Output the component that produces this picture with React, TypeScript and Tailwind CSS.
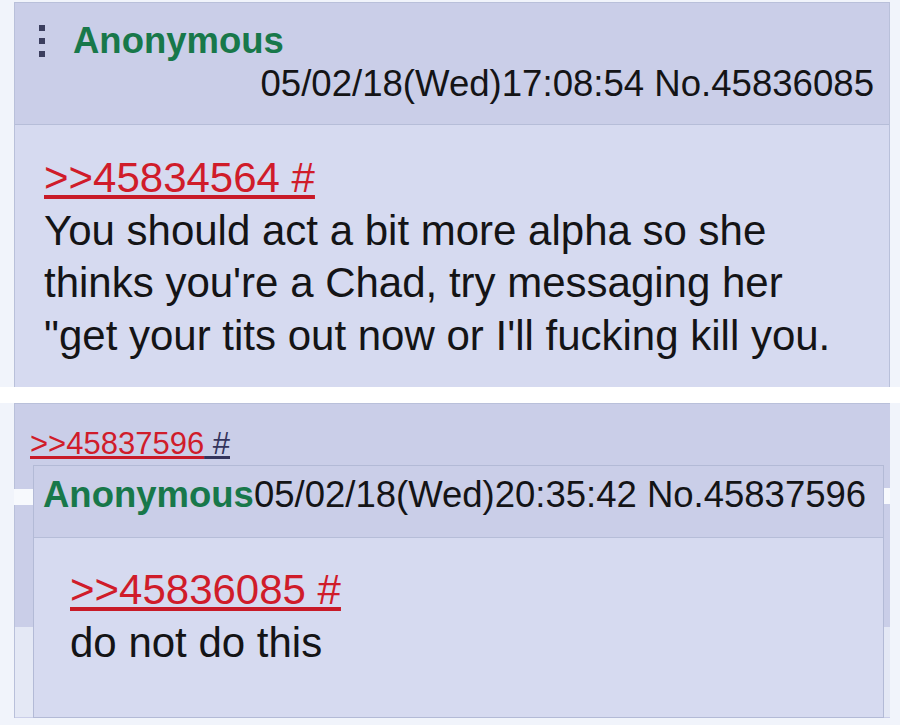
export default function App() {
  return (
    <div className="w-[900px] h-[725px] bg-[#f1f4fb] font-[Liberation_Sans,Arial,sans-serif] text-[#141416]">
      <div className="pt-[2px] pl-[14px] pr-[10px]">
        <div className="border-l border-r border-t border-[#b9c0da]">
          <div className="h-[122px] bg-[#cacee8] border-b border-[#b6bdd8] pt-[18px]">
            <div className="flex items-center h-[40px] pl-[24px]">
              <div className="flex flex-col gap-[7px]">
                <span className="block w-[6px] h-[6px] bg-[#3b3e5e]" />
                <span className="block w-[6px] h-[6px] bg-[#3b3e5e]" />
                <span className="block w-[6px] h-[6px] bg-[#3b3e5e]" />
              </div>
              <span className="ml-[28px] text-[36.5px] leading-[40px] font-bold text-[#18784a]">Anonymous</span>
            </div>
            <div className="mt-[3px] pr-[15px] text-right text-[36.6px] leading-[40px] whitespace-nowrap">
              05/02/18(Wed)17:08:54 No.45836085
            </div>
          </div>
          <div className="h-[262px] bg-[#d6daf0] pt-[27px] pl-[29px] text-[42px] leading-[52.5px] whitespace-nowrap">
            <div>
              <span className="text-[#d01c2a] underline decoration-[#c81a28]">&gt;&gt;45834564 #</span>
            </div>
            <div>You should act a bit more alpha so she</div>
            <div>thinks you're a Chad, try messaging her</div>
            <div>"get your tits out now or I'll fucking kill you.</div>
          </div>
        </div>
      </div>
      <div className="h-[16px] bg-white" />
      <div className="pl-[14px] pr-[10px]">
        <div className="relative h-[315px] flex flex-col bg-[#cacee8] border-l border-t border-[#b9c0da] pt-[22px]">
          <div className="pl-[15px] text-[31px] leading-[36px] whitespace-nowrap">
            <span className="text-[#d01c2a] underline decoration-[#c81a28]">&gt;&gt;45837596</span>
            <span className="text-[#34345c] underline decoration-[#34345c]"> #</span>
          </div>
          <div className="mt-[3px] ml-[18px] mr-[6px] flex-1 flex flex-col border border-[#b3bad6]">
            <div className="h-[72px] shrink-0 bg-[#cacee8] border-b border-[#b6bdd8] pt-[9px] pl-[9px] text-[36.5px] leading-[40px] whitespace-nowrap">
              <span className="font-bold text-[#18784a]">Anonymous</span>
              <span>05/02/18(Wed)20:35:42 No.45837596</span>
            </div>
            <div className="flex-1 bg-[#d6daf0] pt-[26px] pl-[36px] text-[42px] leading-[52.5px] whitespace-nowrap">
              <div>
                <span className="text-[#d01c2a] underline decoration-[#c81a28]">&gt;&gt;45836085 #</span>
              </div>
              <div>do not do this</div>
            </div>
          </div>
          <div className="absolute -left-[1px] top-[85px] w-[19px] h-[16px] bg-[#f7f9fd]" />
          <div className="absolute right-0 top-[84px] w-[6px] h-[16px] bg-[#f7f9fd]" />
          <div className="absolute left-0 top-[223px] w-[18px] h-[90px] bg-[#e4e8f5]" />
          <div className="absolute right-0 top-[223px] w-[6px] h-[90px] bg-[#e4e8f5]" />
        </div>
      </div>
    </div>
  );
}
